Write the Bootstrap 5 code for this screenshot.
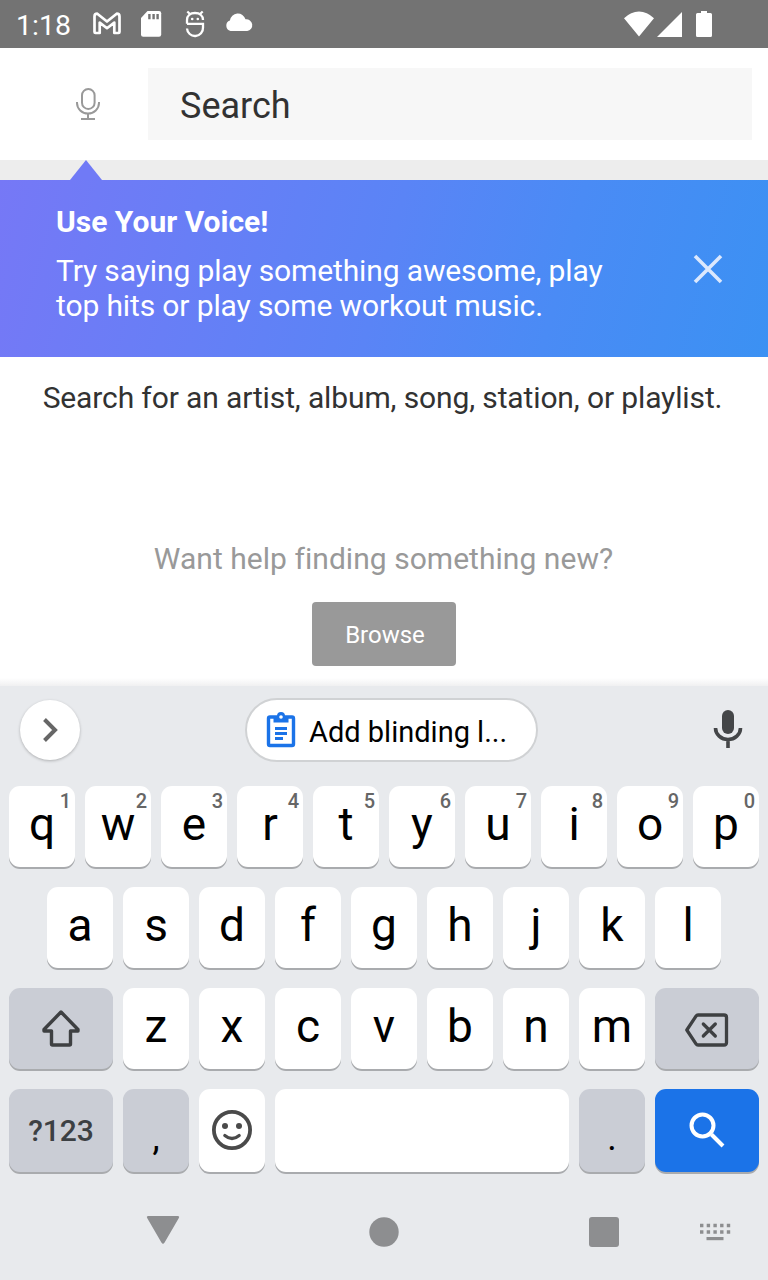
<!DOCTYPE html>
<html lang="en">
<head>
<meta charset="utf-8">
<meta name="viewport" content="width=device-width, initial-scale=1">
<title>Music search</title>
<link href="https://cdn.jsdelivr.net/npm/bootstrap@5.3.0/dist/css/bootstrap.min.css" rel="stylesheet">
<style>
  body { font-family: Roboto, "Liberation Sans", sans-serif; color: #323232; background: #fff; width: 768px; height: 1280px; overflow: hidden; }
  svg { display: block; flex: none; overflow: visible; }
  .statusbar { height: 48px; background: #737373; color: #fff; padding: 2px 55px 0 16px; }
  .clock { font-size: 28.5px; line-height: 46px; width: 77px; letter-spacing: 0; padding-top: 1px; }
  .topbar { height: 112px; padding: 20px 16px 20px 76px; }
  .search-field { margin-left: 48px; background: #f7f7f7; padding: 2px 32px 0; font-size: 36px; line-height: 72px; height: 72px; color: #323232; }
  .strip { height: 20px; background: #ededed; padding-left: 70px; }
  .voice { height: 177px; padding: 24px 46px 0 56px; color: #fff; background: linear-gradient(105deg, #7678f6 0%, #5a84f6 50%, #4a8bf5 72%, #3b91f3 100%); }
  .txt { font-size: 30px; line-height: 35px; margin: 0; }
  .snug { letter-spacing: -.125px; }
  .content { height: 329px; padding-top: 23px; background: linear-gradient(#fff 321px, #f0f0f1); }
  .browse { margin-top: 26px; width: 144px; height: 64px; background: #999; color: #fff; border: 0; border-radius: 4px; font-size: 24px; padding: 2px 0 0 2px; }
  .keyboard { height: 594px; background: #e8eaed; }
  .suggest { height: 100px; padding: 0 26px 12px 20px; }
  .expand { width: 60px; height: 60px; background: #fff; box-shadow: 0 1px 3px rgba(0,0,0,.25); }
  .chip { width: 293px; height: 64px; border: 2px solid #d0d2d4; background: #fff; color: #000; padding: 0 19px; font-size: 29px; letter-spacing: 0; margin-right: 11px; }
  .chip-text { padding-top: 6px; white-space: nowrap; }
  .keys { padding: 0 9px; gap: 19px; }
  .keyrow { gap: 10px; height: 82px; }
  .key { width: 66px; height: 81px; border-radius: 11px; background: #fff; color: #000; box-shadow: 0 2px 0 #a9abae; font-size: 46px; line-height: 76px; text-align: center; padding-bottom: 5px; flex: none; }
  .key sup { position: absolute; top: 5px; right: 4px; font-size: 20px; line-height: 20px; font-weight: 500; color: #666; }
  .wide { width: 104px; }
  .dark { background: #cacdd5; color: #3c4043; }
  .tall .key { height: 83px; }
  .symbols { font-size: 30px; line-height: 84px; font-weight: 500; padding: 0; }
  .punct { color: #000; font-size: 36px; line-height: 98px; padding: 0; }
  .go { background: #1b73e8; }
  .navkeys { padding-top: 43px; height: 107px; }
</style>
</head>
<body>
<header class="statusbar d-flex align-items-center">
  <div class="clock">1:18</div>
  <svg width="160" height="28" viewBox="93 11 160 28" class="me-auto">
    <path d="M94.500 32V16.500q0-2.800 2.800-2.800l9.700 7.800 9.700-7.800q2.800 0 2.800 2.800V32q0 1-1 1h-4.200V22.600L107 28.200l-7.300-5.600V33h-4.200q-1 0-1-1Z" fill="none" stroke="#fff" stroke-width="2.700" stroke-linejoin="round"/>
    <path d="M147.500 11H159q2.200 0 2.200 2.200V34.600q0 2.200-2.200 2.200H143.200q-2.200 0-2.200-2.200V18Z" fill="#fff"/>
    <path d="M149.400 14v5.200M153.600 14v5.200M157.600 14v5.200" stroke="#737373" stroke-width="2.400"/>
    <path d="M187.300 11.500l3.200 3M202.700 11.500l-3.200 3M187 23.800V20c0-4.600 3.300-7 8-7s8 2.400 8 7M187 23.800H203V27.500a8 8 0 0 1-16 1" fill="none" stroke="#fff" stroke-width="2.300"/>
    <circle cx="192.200" cy="19" r="1.300" fill="#fff"/><circle cx="197.800" cy="19" r="1.300" fill="#fff"/>
    <path d="M230.500 31a5.500 5.500 0 0 1-.6-10.500 8 8 0 0 1 15.600-1.200A5.900 5.900 0 0 1 247.200 31Z" fill="#fff"/>
  </svg>
  <svg width="90" height="28" viewBox="623 11 90 28">
    <path d="M624 18.300Q631 11.500 639 11.500T654 18.300L639 36.500ZM682 12V37H657Z" fill="#fff"/>
    <path d="M701 11h6v2h3.500q1.500 0 1.500 1.500v21q0 1.500-1.500 1.500h-13q-1.500 0-1.500-1.500v-21q0-1.500 1.500-1.500h3.500Z" fill="#fff"/>
  </svg>
</header>

<div class="topbar d-flex align-items-center">
  <svg width="24" height="34" viewBox="0 0 24 34" fill="none" stroke="#999" stroke-width="2">
    <rect x="6" y="2" width="12.600" height="20" rx="6.300"/><path d="M1 15v1a11 10.500 0 0 0 22 0v-1M12 26.500v5.500M5 32h14"/>
  </svg>
  <div class="search-field flex-fill">Search</div>
</div>
<div class="strip"><svg width="32" height="20"><path d="M0 20 16 0 32 20Z" fill="#707af6"/></svg></div>

<section class="voice d-flex justify-content-between">
  <div>
    <h2 class="txt fw-bold">Use Your Voice!</h2>
    <p class="txt snug" style="margin-top:14px">Try saying play something awesome, play<br>top hits or play some workout music.</p>
  </div>
  <svg width="28" height="28" viewBox="0 0 28 28" style="margin-top:51px"><path d="M1 1 27 27M27 1 1 27" stroke="#dce8fd" stroke-width="3.600"/></svg>
</section>

<main class="content text-center">
  <p class="txt snug" style="margin-left:-3px">Search for an artist, album, song, station, or playlist.</p>
  <p class="txt" style="margin-top:126px;margin-left:-1px;color:#999;letter-spacing:.04px">Want help finding something new?</p>
  <button type="button" class="btn browse">Browse</button>
</main>

<section class="keyboard">
  <div class="suggest d-flex align-items-center justify-content-between">
    <div class="expand rounded-circle d-flex align-items-center justify-content-center">
      <svg width="14" height="24" viewBox="0 0 14 24"><path d="M1.500 1.500 12 12 1.500 22.500" fill="none" stroke="#666" stroke-width="4"/></svg>
    </div>
    <div class="chip rounded-pill d-flex align-items-center">
      <svg width="30" height="36" viewBox="0 0 30 36" style="margin-right:13px">
        <rect x="2.500" y="5" width="25" height="28.500" rx="1.500" fill="#fff" stroke="#1b73e8" stroke-width="3.400"/>
        <path d="M7.500 4h3.500a4 4 0 0 1 8 0h3.500v6.500h-15Z" fill="#1b73e8"/><circle cx="15" cy="5" r="1.800" fill="#fff"/>
        <path d="M9 16.500h12M9 21.500h12M9 26.500h8" stroke="#1b73e8" stroke-width="3"/>
      </svg>
      <span class="chip-text">Add blinding l...</span>
    </div>
    <svg width="28" height="38" viewBox="0 0 28 38" style="margin-top:-2px"><rect x="8" y="0" width="12" height="24" rx="6" fill="#444648"/><path d="M1.500 18a12.500 11.500 0 0 0 25 0M14 30v8" fill="none" stroke="#444648" stroke-width="3.600"/></svg>
  </div>

  <div class="keys d-flex flex-column">
    <div class="keyrow d-flex justify-content-center">
      <div class="key position-relative">q<sup>1</sup></div><div class="key position-relative">w<sup>2</sup></div><div class="key position-relative">e<sup>3</sup></div><div class="key position-relative">r<sup>4</sup></div><div class="key position-relative">t<sup>5</sup></div><div class="key position-relative">y<sup>6</sup></div><div class="key position-relative">u<sup>7</sup></div><div class="key position-relative">i<sup>8</sup></div><div class="key position-relative">o<sup>9</sup></div><div class="key position-relative">p<sup>0</sup></div>
    </div>
    <div class="keyrow d-flex justify-content-center">
      <div class="key">a</div><div class="key">s</div><div class="key">d</div><div class="key">f</div><div class="key">g</div><div class="key">h</div><div class="key">j</div><div class="key">k</div><div class="key">l</div>
    </div>
    <div class="keyrow d-flex justify-content-center">
      <div class="key wide dark d-flex align-items-center justify-content-center pb-0">
        <svg width="38" height="38" viewBox="0 0 38 38"><path d="M19 2 36 19.500v1.500H28.500v13q0 1-1 1H10.500q-1 0-1-1V21H2V19.500Z" fill="none" stroke="#3e4042" stroke-width="3.400" stroke-linejoin="round"/></svg>
      </div>
      <div class="key">z</div><div class="key">x</div><div class="key">c</div><div class="key">v</div><div class="key">b</div><div class="key">n</div><div class="key">m</div>
      <div class="key wide dark d-flex align-items-center justify-content-center pb-0">
        <svg width="44" height="34" viewBox="0 0 44 34" style="margin-top:2px" fill="none" stroke="#3e4042" stroke-width="3.300"><path d="M13 2H39q2.500 0 2.500 2.500v25Q41.500 32 39 32H13q-1.200 0-2-1.200L1.800 17 11 3.200Q11.800 2 13 2Z" stroke-linejoin="round"/><path d="M18.300 11 30.300 23M30.300 11 18.300 23" stroke-linecap="round"/></svg>
      </div>
    </div>
    <div class="keyrow tall d-flex justify-content-center">
      <div class="key wide dark symbols">?123</div>
      <div class="key dark punct">,</div>
      <div class="key d-flex align-items-center justify-content-center pb-0">
        <svg width="40" height="40" viewBox="0 0 40 40" style="margin-top:-1px" fill="none" stroke="#4a4a4a"><circle cx="20" cy="20" r="18.100" stroke-width="3.800"/><path d="M12.800 25.500q7.200 6 14.400 0" stroke-width="3.200" stroke-linecap="round"/><circle cx="13" cy="16" r="3" fill="#4a4a4a" stroke="none"/><circle cx="27" cy="16" r="3" fill="#4a4a4a" stroke="none"/></svg>
      </div>
      <div class="key flex-fill"></div>
      <div class="key dark punct">.</div>
      <div class="key wide go d-flex align-items-center justify-content-center pb-0">
        <svg width="36" height="36" viewBox="0 0 36 36" style="margin-top:-2px" fill="none" stroke="#fff" stroke-width="4"><circle cx="13.500" cy="13.500" r="11"/><path d="M22.500 22.500 34 34"/></svg>
      </div>
    </div>
  </div>

  <nav class="navkeys">
    <svg width="768" height="34" viewBox="0 1214 768 34" fill="#8d8e90">
      <path d="M148.500 1216h29q2.500 0 1.200 2.200L164.600 1242.500q-1.600 2.600-3.200 0L147.300 1218.200Q146 1216 148.500 1216Z"/>
      <circle cx="384" cy="1232" r="14.700"/><rect x="589" y="1217" width="30" height="30" rx="3"/>
      <path d="M700 1225.500h31M700 1232h31" stroke="#8d8e90" stroke-width="3.400" stroke-dasharray="3.400 3.300"/>
      <path d="M706.500 1237h17v3.200h-17z"/>
    </svg>
  </nav>
</section>
<script src="https://cdn.jsdelivr.net/npm/bootstrap@5.3.0/dist/js/bootstrap.bundle.min.js"></script>
</body>
</html>
